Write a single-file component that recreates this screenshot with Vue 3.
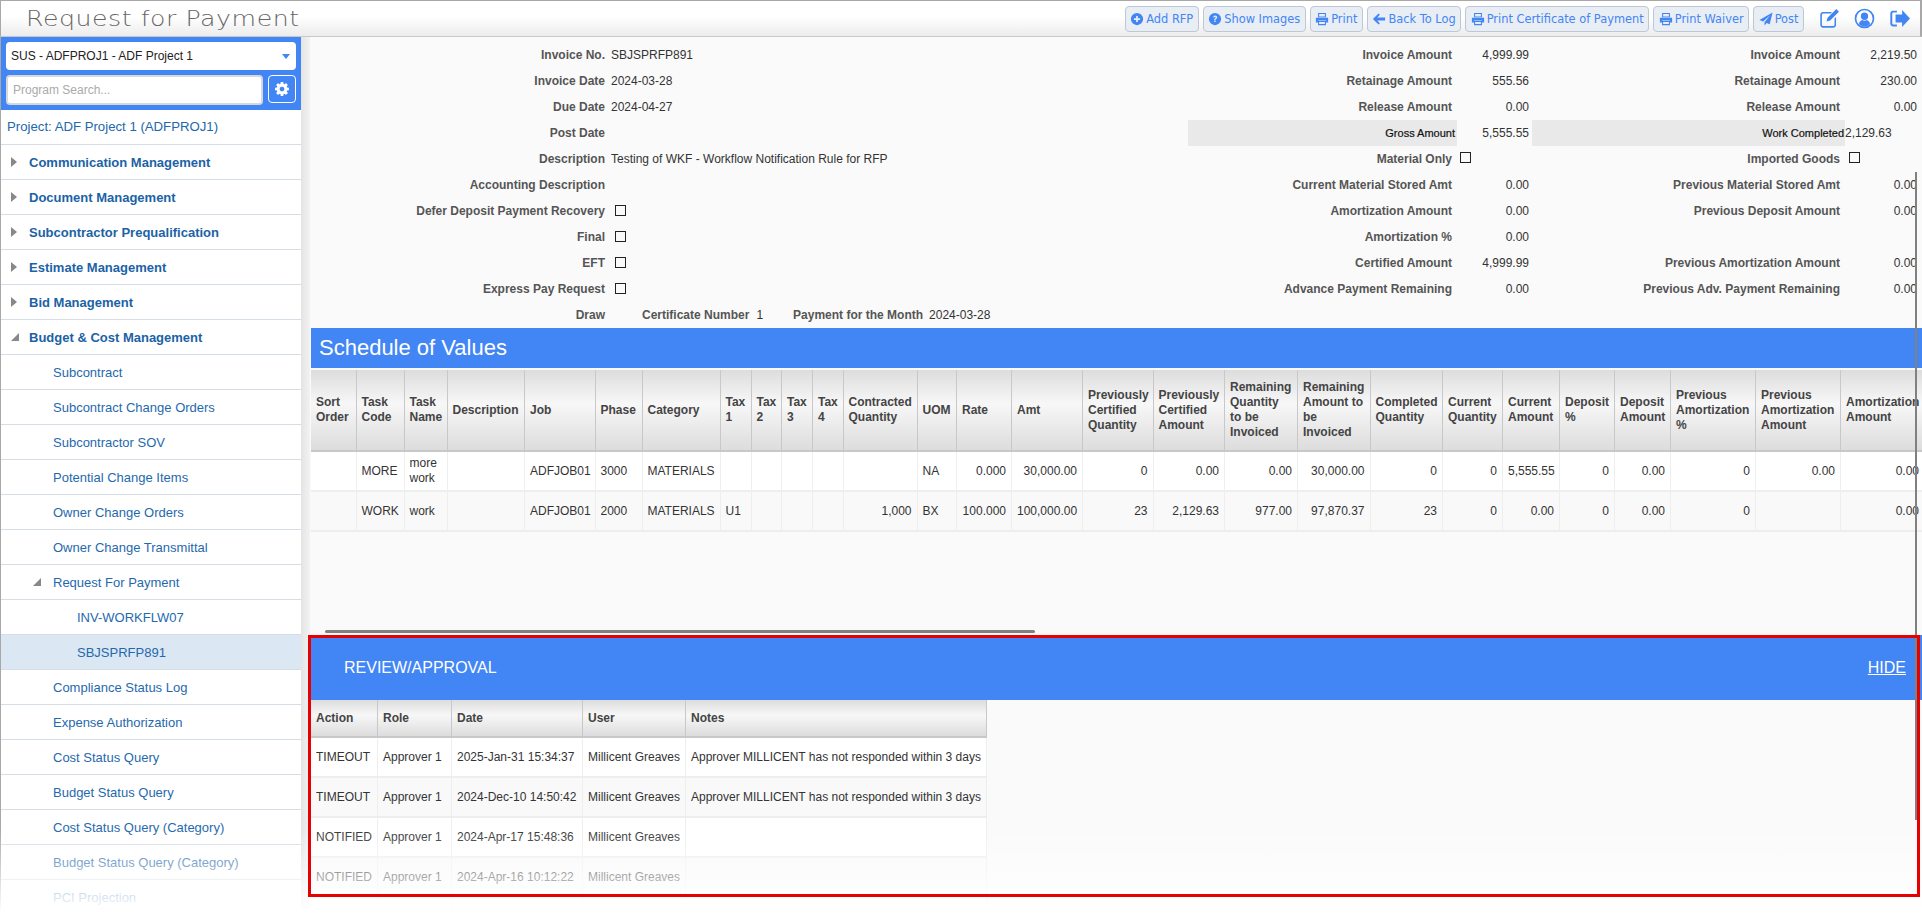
<script setup>
const icons = {
  plus: 'M8 1a7 7 0 1 0 0 14A7 7 0 0 0 8 1z M7 4.5h2V7h2.5v2H9v2.5H7V9H4.5V7H7z',
  question: 'M8 1a7 7 0 1 0 0 14A7 7 0 0 0 8 1z M6 6.2C6 5 6.9 4 8.2 4c1.4 0 2.3 1 2.3 2.1 0 1-.6 1.5-1.2 1.9-.5.3-.7.5-.7 1H7.1c0-1 .4-1.5 1-1.9.5-.3.8-.6.8-1 0-.4-.3-.8-.8-.8s-.7.4-.8 1z M7.1 9.8h1.6v1.6H7.1z',
  print: 'M3.5 1h9v5h-9z M4.7 2.2v3h6.6v-3z M1 6.5h14V12h-2.5V9.7h-9V12H1z M3.5 10.2h9V15h-9z M4.7 11.4v2.4h6.6v-2.4z',
  back: 'M1 8l6.5-6.3L9 3.2 6 6.3h9v3.4H6l3 3.1-1.5 1.5z',
  plane: 'M15.5.5L.5 9l4.2 1.8L13 3.5l-6.7 8.2v3.8l2.5-3 3.4 1.5z',
  edit: 'M3 3h7L8.8 4.2H3.3c-.6 0-1.1.5-1.1 1.1v7.4c0 .6.5 1.1 1.1 1.1h7.4c.6 0 1.1-.5 1.1-1.1V8L13 6.8V13c0 1.1-.9 2-2 2H3c-1.1 0-2-.9-2-2V5c0-1.1.9-2 2-2z M13.2.8l2 2-6.7 6.7-2.8.8.8-2.8z',
  user: 'M8 .5a7.5 7.5 0 1 0 0 15 7.5 7.5 0 0 0 0-15z M8 1.8a6.2 6.2 0 1 1 0 12.4 6.2 6.2 0 0 1 0-12.4z M8 3.5a2.8 2.8 0 1 1 0 5.6 2.8 2.8 0 0 1 0-5.6z M3.8 12.2c.3-1.8 1.4-2.8 2.6-3 .5.3 1 .5 1.6.5s1.1-.2 1.6-.5c1.2.2 2.3 1.2 2.6 3C11.2 13.5 9.7 14 8 14s-3.2-.5-4.2-1.8z',
  out: 'M6 2H3C1.9 2 1 2.9 1 4v8c0 1.1.9 2 2 2h3v-1.5H3.2c-.4 0-.7-.3-.7-.7V4.2c0-.4.3-.7.7-.7H6z M10 1.5L16 8l-6 6.5V11H5V5h5z',
}
const cog = 'M1024 640q0-106-75-181t-181-75-181 75-75 181 75 181 181 75 181-75 75-181zm512-109v222q0 12-8 23t-20 13l-185 28q-19 54-39 91 35 50 107 138 10 12 10 25t-9 23q-27 37-99 108t-94 71q-12 0-26-9l-138-108q-44 23-91 38-16 136-29 186-7 28-36 28h-222q-14 0-24.5-8.5t-11.5-21.5l-28-184q-49-16-90-37l-141 107q-10 9-25 9-14 0-25-11-126-114-165-168-7-10-7-23 0-12 8-23 15-21 51-66.5t54-70.5q-27-50-41-99l-183-27q-13-2-21-12.5t-8-23.5v-222q0-12 8-23t19-13l186-28q14-46 39-92-40-57-107-138-10-12-10-24 0-10 9-23 26-36 98.5-107.5t94.5-71.5q13 0 26 10l138 107q44-23 91-38 16-136 29-186 7-28 36-28h222q14 0 24.5 8.5t11.5 21.5l28 184q49 16 90 37l142-107q9-9 24-9 13 0 25 10 129 119 165 170 7 8 7 22 0 12-8 23-15 21-51 66.5t-54 70.5q26 50 41 98l183 28q13 2 21 12.5t8 23.5z'

const buttons = [
  { t: 'Add RFP', i: 'plus' },
  { t: 'Show Images', i: 'question' },
  { t: 'Print', i: 'print' },
  { t: 'Back To Log', i: 'back' },
  { t: 'Print Certificate of Payment', i: 'print' },
  { t: 'Print Waiver', i: 'print' },
  { t: 'Post', i: 'plane' },
]

const nav = [
  { t: 'Communication Management', k: 'top closed' },
  { t: 'Document Management', k: 'top closed' },
  { t: 'Subcontractor Prequalification', k: 'top closed' },
  { t: 'Estimate Management', k: 'top closed' },
  { t: 'Bid Management', k: 'top closed' },
  { t: 'Budget & Cost Management', k: 'top open' },
  { t: 'Subcontract', k: 'sub' },
  { t: 'Subcontract Change Orders', k: 'sub' },
  { t: 'Subcontractor SOV', k: 'sub' },
  { t: 'Potential Change Items', k: 'sub' },
  { t: 'Owner Change Orders', k: 'sub' },
  { t: 'Owner Change Transmittal', k: 'sub' },
  { t: 'Request For Payment', k: 'sub open' },
  { t: 'INV-WORKFLW07', k: 'leaf' },
  { t: 'SBJSPRFP891', k: 'leaf active' },
  { t: 'Compliance Status Log', k: 'sub' },
  { t: 'Expense Authorization', k: 'sub' },
  { t: 'Cost Status Query', k: 'sub' },
  { t: 'Budget Status Query', k: 'sub' },
  { t: 'Cost Status Query (Category)', k: 'sub' },
  { t: 'Budget Status Query (Category)', k: 'sub' },
  { t: 'PCI Projection', k: 'sub' },
]

const form = [
  ['Invoice No.', 'SBJSPRFP891', 'Invoice Amount', '4,999.99', 'Invoice Amount', '2,219.50'],
  ['Invoice Date', '2024-03-28', 'Retainage Amount', '555.56', 'Retainage Amount', '230.00'],
  ['Due Date', '2024-04-27', 'Release Amount', '0.00', 'Release Amount', '0.00'],
  ['Post Date', '', 'Gross Amount', '5,555.55', 'Work Completed', '2,129.63'],
  ['Description', 'Testing of WKF - Workflow Notification Rule for RFP', 'Material Only', '[]', 'Imported Goods', '[]'],
  ['Accounting Description', '', 'Current Material Stored Amt', '0.00', 'Previous Material Stored Amt', '0.00'],
  ['Defer Deposit Payment Recovery', '[]', 'Amortization Amount', '0.00', 'Previous Deposit Amount', '0.00'],
  ['Final', '[]', 'Amortization %', '0.00', '', ''],
  ['EFT', '[]', 'Certified Amount', '4,999.99', 'Previous Amortization Amount', '0.00'],
  ['Express Pay Request', '[]', 'Advance Payment Remaining', '0.00', 'Previous Adv. Payment Remaining', '0.00'],
]

const cols = [
  ['Sort Order', 45], ['Task Code', 48], ['Task Name', 43], ['Description', 77.5], ['Job', 70.5], ['Phase', 47],
  ['Category', 78], ['Tax 1', 31], ['Tax 2', 30.5], ['Tax 3', 31], ['Tax 4', 30.5], ['Contracted Quantity', 74],
  ['UOM', 39.5], ['Rate', 55], ['Amt', 71], ['Previously Certified Quantity', 70.5], ['Previously Certified Amount', 71.5],
  ['Remaining Quantity to be Invoiced', 73], ['Remaining Amount to be Invoiced', 72.5], ['Completed Quantity', 72.5],
  ['Current Quantity', 60], ['Current Amount', 57], ['Deposit %', 55], ['Deposit Amount', 56],
  ['Previous Amortization %', 85], ['Previous Amortization Amount', 85], ['Amortization Amount', 84],
]
const leftCols = new Set([0, 1, 2, 3, 4, 5, 6, 7, 8, 9, 10, 12])
const rows = [
  ['', 'MORE', 'more work', '', 'ADFJOB01', '3000', 'MATERIALS', '', '', '', '', '', 'NA', '0.000', '30,000.00', '0', '0.00', '0.00', '30,000.00', '0', '0', '5,555.55', '0', '0.00', '0', '0.00', '0.00'],
  ['', 'WORK', 'work', '', 'ADFJOB01', '2000', 'MATERIALS', 'U1', '', '', '', '1,000', 'BX', '100.000', '100,000.00', '23', '2,129.63', '977.00', '97,870.37', '23', '0', '0.00', '0', '0.00', '0', '', '0.00'],
]

const reviewCols = [['Action', 67.5], ['Role', 74], ['Date', 131], ['User', 103], ['Notes', 300.5]]
const notes = 'Approver MILLICENT has not responded within 3 days'
const reviewRows = [
  ['TIMEOUT', 'Approver 1', '2025-Jan-31 15:34:37', 'Millicent Greaves', notes],
  ['TIMEOUT', 'Approver 1', '2024-Dec-10 14:50:42', 'Millicent Greaves', notes],
  ['NOTIFIED', 'Approver 1', '2024-Apr-17 15:48:36', 'Millicent Greaves', ''],
  ['NOTIFIED', 'Approver 1', '2024-Apr-16 10:12:22', 'Millicent Greaves', ''],
  ['', '', '', '', ''],
]
</script>

<template>
  <div class="page">
    <header class="topbar">
      <h1 class="title">Request for Payment</h1>
      <div class="actions">
        <button v-for="b in buttons" :key="b.t" class="btn">
          <svg class="ico" viewBox="0 0 16 16"><path :d="icons[b.i]" fill-rule="evenodd" /></svg>
          <span>{{ b.t }}</span>
        </button>
      </div>
      <div class="tools">
        <svg class="tool" viewBox="0 0 16 16"><path :d="icons.edit" fill-rule="evenodd" /></svg>
        <svg class="tool" viewBox="0 0 16 16"><path :d="icons.user" fill-rule="evenodd" /></svg>
        <svg class="tool" viewBox="0 0 16 16"><path :d="icons.out" fill-rule="evenodd" /></svg>
      </div>
    </header>

    <div class="body">
      <aside class="side">
        <div class="side-head">
          <div class="select">
            <span>SUS - ADFPROJ1 - ADF Project 1</span>
            <i class="caret"></i>
          </div>
          <div class="search-row">
            <div class="search">Program Search...</div>
            <div class="gear">
              <svg viewBox="0 -128 1536 1536"><path :d="cog" fill="#fff" /></svg>
            </div>
          </div>
        </div>
        <div class="project">Project: ADF Project 1 (ADFPROJ1)</div>
        <div v-for="n in nav" :key="n.t" class="nav" :class="n.k">
          <i v-if="n.k.includes('closed')" class="tri-right"></i>
          <svg v-if="n.k.includes('open')" class="tri-down" viewBox="0 0 8 8"><polygon points="8,0 8,8 0,8" /></svg>
          <span>{{ n.t }}</span>
        </div>
      </aside>
      <div class="gutter"></div>

      <main class="main">
        <section class="form">
          <template v-for="r in form" :key="r[0]">
            <template v-for="(c, i) in r" :key="i">
              <div v-if="i % 2 === 0" class="lab" :class="['lab' + i, { gray: c === 'Gross Amount' || c === 'Work Completed' }]">{{ c }}</div>
              <div v-else class="val" :class="['val' + i, { flush: r[i - 1] === 'Work Completed' }]">
                <i v-if="c === '[]'" class="check"></i>
                <template v-else>{{ c }}</template>
              </div>
            </template>
          </template>
          <div class="lab lab0">Draw</div>
          <div class="val val1 draw">
            <b class="cert">Certificate Number</b><span class="certv">1</span>
            <b class="pay">Payment for the Month</b><span>2024-03-28</span>
          </div>
        </section>

        <div class="sov-title">Schedule of Values</div>

        <div class="sov">
          <table class="grid sov-grid">
            <colgroup>
              <col v-for="c in cols" :key="c[0]" :style="{ width: c[1] + 'px' }" />
            </colgroup>
            <thead>
              <tr><th v-for="c in cols" :key="c[0]">{{ c[0] }}</th></tr>
            </thead>
            <tbody>
              <tr v-for="(r, ri) in rows" :key="ri">
                <td v-for="(v, i) in r" :key="i" :class="{ num: !leftCols.has(i) }">{{ v }}</td>
              </tr>
            </tbody>
          </table>
          <div class="hbar"></div>
        </div>

        <section class="review">
          <div class="review-head">
            <span>REVIEW/APPROVAL</span>
            <a class="hide">HIDE</a>
          </div>
          <table class="grid review-grid">
            <colgroup>
              <col v-for="c in reviewCols" :key="c[0]" :style="{ width: c[1] + 'px' }" />
            </colgroup>
            <thead>
              <tr><th v-for="c in reviewCols" :key="c[0]">{{ c[0] }}</th></tr>
            </thead>
            <tbody>
              <tr v-for="(r, ri) in reviewRows" :key="ri">
                <td v-for="(v, i) in r" :key="i">{{ v }}</td>
              </tr>
            </tbody>
          </table>
        </section>
      </main>
    </div>

    <div class="fade"></div>
    <div class="vbar"></div>
    <div class="redbox"></div>
  </div>
</template>

<style>
html, body { margin: 0; padding: 0; background: #fff; overflow: hidden; }
</style>

<style scoped>
.page {
  position: relative;
  width: 1922px;
  height: 913px;
  overflow: hidden;
  display: flex;
  flex-direction: column;
  font-family: "Liberation Sans", Arial, sans-serif;
  font-size: 12px;
  color: #333;
  background: #fff;
}
.topbar {
  flex: 0 0 37px;
  box-sizing: border-box;
  display: flex;
  align-items: center;
  border-top: 1px solid #a8a8a8;
  border-left: 1px solid #a8a8a8;
  border-right: 2px solid #a8a8a8;
  border-bottom: 1px solid #c8c8c8;
  background: linear-gradient(#fff 45%, #ececec);
}
.title {
  margin: 0 0 0 25px;
  font-family: "DejaVu Sans", sans-serif;
  font-weight: 200;
  font-size: 21px;
  letter-spacing: 0.45px;
  color: #666;
  white-space: nowrap;
  transform: scaleX(1.2);
  transform-origin: left center;
}
.actions {
  margin-left: auto;
  display: flex;
  gap: 4px;
}
.btn {
  height: 26px;
  box-sizing: border-box;
  display: flex;
  align-items: center;
  gap: 2px;
  padding: 0 4.5px;
  border: 1px solid #bcc8d6;
  border-radius: 4px;
  background: #e9eef4;
  color: #4285f4;
  font-family: "DejaVu Sans", sans-serif;
  font-size: 11.4px;
  white-space: nowrap;
}
.ico { width: 14px; height: 14px; fill: #4285f4; flex: none; }
.tools {
  display: flex;
  gap: 14px;
  margin: 0 10px 0 15px;
}
.tool { width: 21px; height: 21px; fill: #4285f4; }

.body { flex: 1; display: flex; min-height: 0; }
.side {
  width: 301px;
  flex: none;
  box-sizing: border-box;
  border-left: 1px solid #a8a8a8;
  font-size: 13px;
  background: #fff;
}
.side-head {
  box-sizing: border-box;
  height: 73px;
  background: #4285f4;
  padding: 5px 5px 0 5px;
  font-size: 12px;
}
.select {
  box-sizing: border-box;
  height: 28px;
  display: flex;
  align-items: center;
  justify-content: space-between;
  padding: 0 6px 0 5px;
  background: #fff;
  border-radius: 4px;
  color: #222;
}
.caret {
  width: 0;
  height: 0;
  border-left: 4.5px solid transparent;
  border-right: 4.5px solid transparent;
  border-top: 5px solid #4285f4;
}
.search-row {
  display: flex;
  justify-content: space-between;
  margin-top: 5px;
}
.search {
  box-sizing: border-box;
  width: 257px;
  height: 30px;
  line-height: 26px;
  padding-left: 5px;
  background: #fff;
  border: 2px solid #d8d8d8;
  border-radius: 4px;
  color: #aaa;
}
.gear {
  box-sizing: border-box;
  width: 28px;
  height: 28px;
  border: 1px solid #fff;
  border-radius: 4px;
  display: flex;
  align-items: center;
  justify-content: center;
}
.gear svg { width: 14px; height: 14px; }
.project {
  box-sizing: border-box;
  height: 35px;
  line-height: 34px;
  padding-left: 6px;
  font-size: 13.2px;
  color: #2168ac;
  border-bottom: 1px solid #d5dde6;
}
.nav {
  position: relative;
  box-sizing: border-box;
  height: 35px;
  display: flex;
  align-items: center;
  border-bottom: 1px solid #d5dde6;
  color: #1f69ae;
  white-space: nowrap;
}
.nav.top { padding-left: 28px; font-weight: bold; color: #1b62a6; }
.nav.sub { padding-left: 52px; }
.nav.leaf { padding-left: 76px; }
.nav.active { background: #dbe7f3; }
.tri-right {
  position: absolute;
  left: 10px;
  top: 12px;
  width: 0;
  height: 0;
  border-top: 5px solid transparent;
  border-bottom: 5px solid transparent;
  border-left: 6px solid #888;
}
.tri-down {
  position: absolute;
  left: 10px;
  top: 13px;
  width: 8px;
  height: 8px;
  fill: #888;
}
.nav.sub .tri-down { left: 32px; }
.gutter {
  width: 9px;
  flex: none;
  background: linear-gradient(90deg, #e4e4e4, #f2f2f2);
}

.main {
  flex: 1;
  min-width: 0;
  display: flex;
  flex-direction: column;
  background: #fafafa;
  padding-left: 1px;
}
.form {
  box-sizing: border-box;
  height: 291px;
  padding-top: 5px;
  display: grid;
  grid-template-columns: 294px 583px 269px 75px 313px 1fr;
  grid-auto-rows: 26px;
  align-items: center;
  color: #333;
}
.lab {
  height: 26px;
  line-height: 26px;
  text-align: right;
  padding-right: 5px;
  font-weight: bold;
  color: #555;
  white-space: nowrap;
  box-sizing: border-box;
}
.lab0 { padding-right: 0; }
.lab.gray {
  background: #e9e9e9;
  color: #111;
  font-weight: normal;
  font-size: 11px;
  padding-right: 2px;
  -webkit-text-stroke: 0.2px #111;
}
.lab4.gray { padding-right: 1px; }
.val { white-space: nowrap; height: 26px; line-height: 26px; }
.val1 { padding-left: 6px; }
.val3 { text-align: right; padding-right: 3px; }
.val5 { text-align: right; padding-right: 5px; }
.val5.flush { text-align: left; padding: 0; }
.check {
  display: inline-block;
  box-sizing: border-box;
  width: 11px;
  height: 11px;
  border: 1px solid #222;
  vertical-align: middle;
}
.val1 .check { margin: 0 0 3px 4px; }
.val3, .val5 { position: relative; }
.val3 .check { position: absolute; left: 3px; top: 6px; }
.val5 .check { position: absolute; left: 4px; top: 6px; }
.draw { display: flex; }
.draw b { font-weight: bold; color: #555; }
.cert { margin-left: 31px; }
.certv { margin-left: 7px; }
.pay { margin-left: 30px; margin-right: 6px; }

.sov-title {
  height: 40px;
  line-height: 40px;
  background: #4285f4;
  color: #fff;
  font-size: 22px;
  padding-left: 8px;
  flex: none;
}
.sov {
  position: relative;
  flex: none;
  height: 265px;
  margin-top: 2px;
  overflow: hidden;
}
.hbar {
  position: absolute;
  left: 14px;
  top: 260px;
  width: 710px;
  height: 3px;
  border-radius: 2px;
  background: #808080;
}
.grid {
  border-collapse: collapse;
  table-layout: fixed;
  font-size: 12px;
  color: #333;
}
.sov-grid { width: 1613.5px; }
.review-grid { width: 676px; margin-left: -1px; }
.grid th {
  box-sizing: border-box;
  padding: 0 5px;
  text-align: left;
  font-weight: bold;
  line-height: 15px;
  color: #444;
  border-right: 1px solid #c8c8c8;
  border-bottom: 2px solid #c8c8c8;
  background: linear-gradient(#dcdcdc, #f7f7f7 42%, #eee 62%, #dcdcdc);
}
.sov-grid th { height: 81px; }
.review-grid th { height: 37px; }
.review-grid th:first-child, .review-grid td:first-child { padding-left: 6px; }
.grid td {
  box-sizing: border-box;
  padding: 0 5px;
  line-height: 15px;
  border-right: 1px solid #eee;
  border-bottom: 2px solid #eee;
  background: #fff;
}
.grid tbody tr:nth-child(even) td { background: #f9f9f9; }
.sov-grid td { height: 40px; }
.review-grid td { height: 40px; white-space: nowrap; overflow: hidden; }
.num { text-align: right; }

.review { flex: 1; min-height: 0; overflow: hidden; }
.review-head {
  box-sizing: border-box;
  height: 65px;
  display: flex;
  align-items: center;
  justify-content: space-between;
  padding: 0 16px 0 33px;
  background: #4285f4;
  color: #fff;
  font-size: 16px;
}
.hide { text-decoration: underline; color: #fff; }

.fade {
  position: absolute;
  left: 0;
  right: 0;
  bottom: 0;
  height: 85px;
  background: linear-gradient(rgba(255, 255, 255, 0), #fff);
  pointer-events: none;
}
.vbar {
  position: absolute;
  left: 1915px;
  top: 172px;
  width: 2px;
  height: 648px;
  background: #808080;
}
.redbox {
  position: absolute;
  left: 308px;
  top: 635px;
  width: 1606px;
  height: 256px;
  border: 3px solid #e60000;
  pointer-events: none;
}
</style>
